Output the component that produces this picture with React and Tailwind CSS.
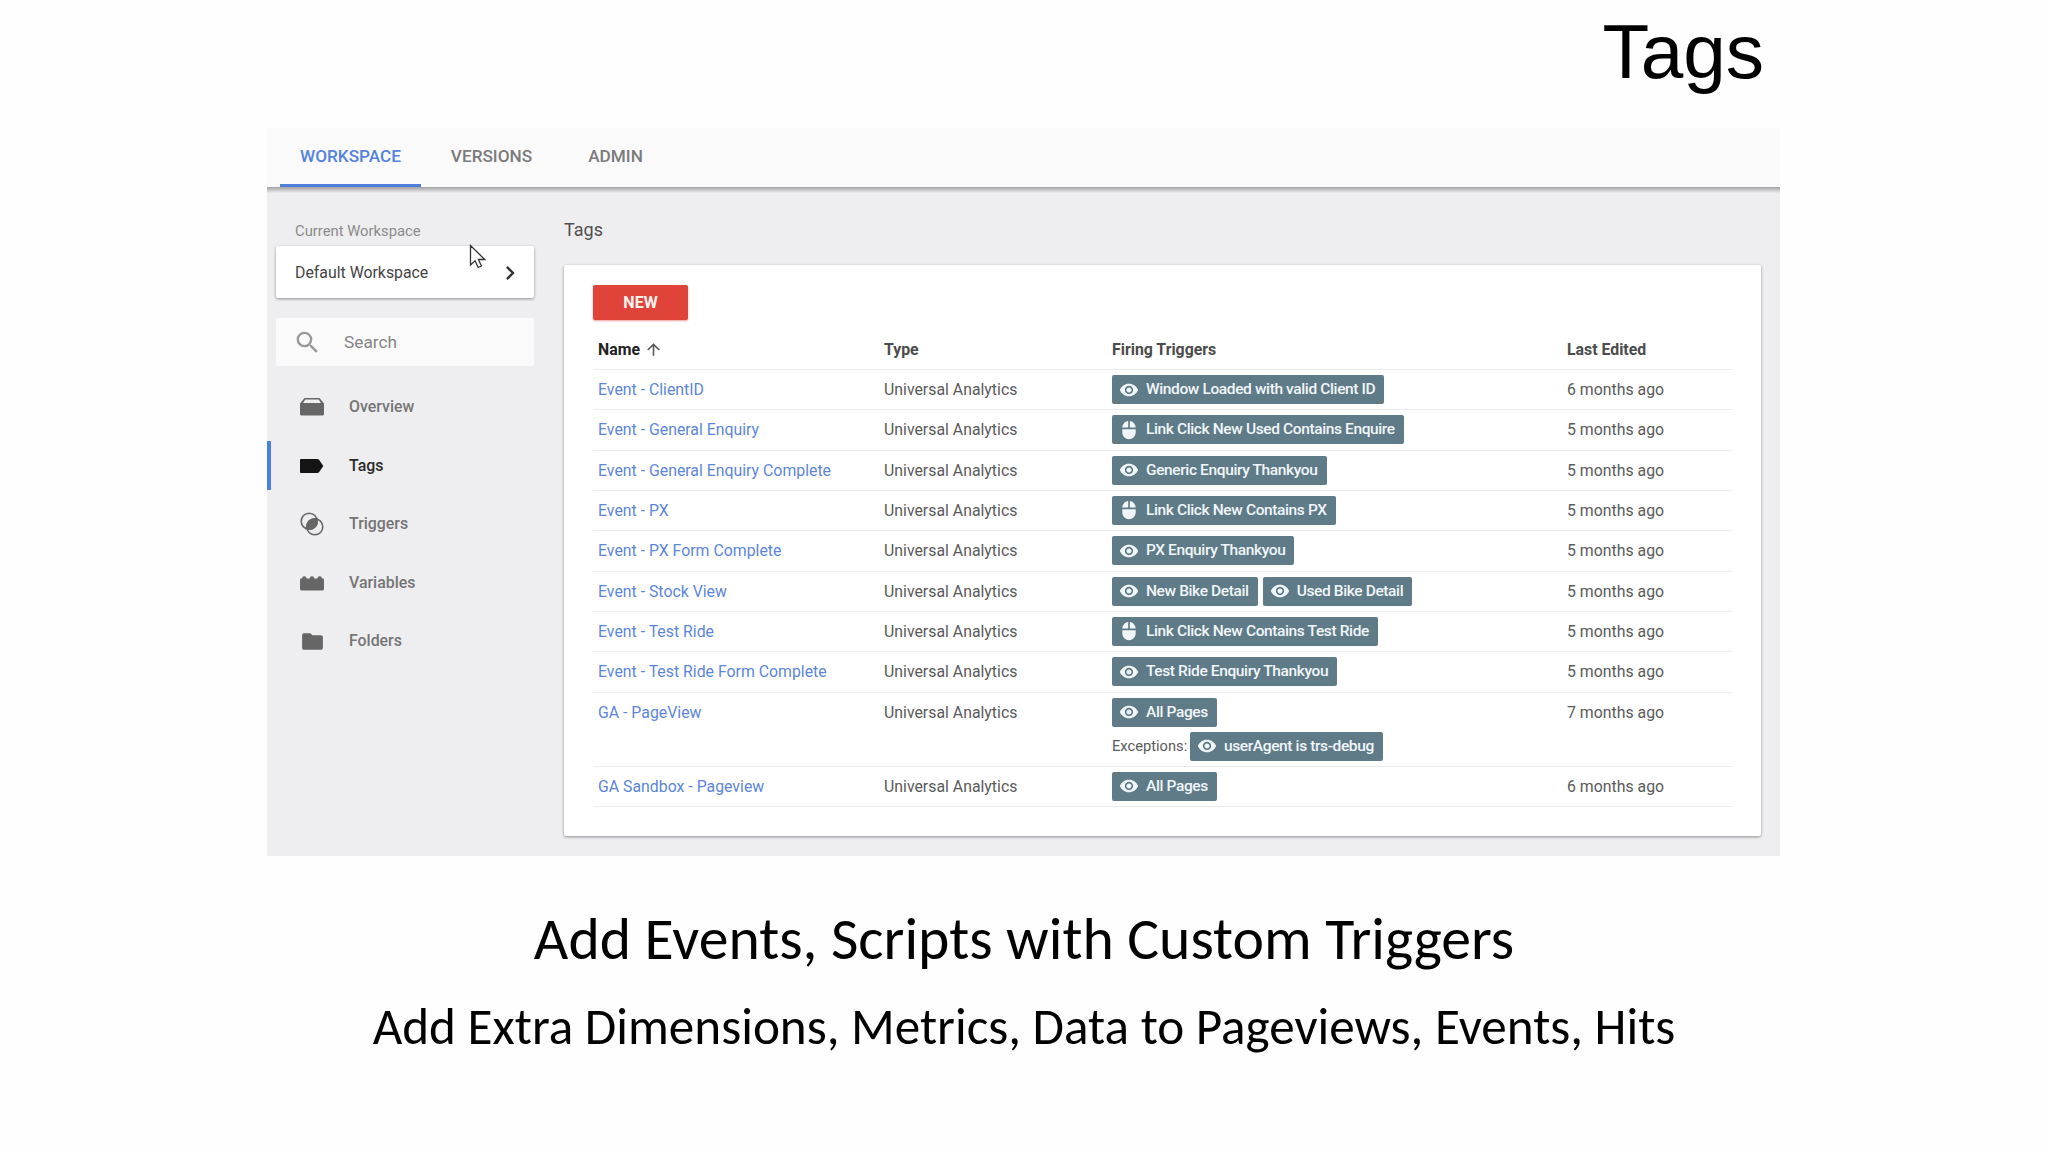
import { MdArrowUpward, MdChevronRight, MdFolder, MdMouse, MdSearch, MdVisibility } from 'react-icons/md'

const tags = [
  { name: 'Event - ClientID', edited: '6 months ago', triggers: [{ kind: 'view', label: 'Window Loaded with valid Client ID' }] },
  { name: 'Event - General Enquiry', edited: '5 months ago', triggers: [{ kind: 'click', label: 'Link Click New Used Contains Enquire' }] },
  { name: 'Event - General Enquiry Complete', edited: '5 months ago', triggers: [{ kind: 'view', label: 'Generic Enquiry Thankyou' }] },
  { name: 'Event - PX', edited: '5 months ago', triggers: [{ kind: 'click', label: 'Link Click New Contains PX' }] },
  { name: 'Event - PX Form Complete', edited: '5 months ago', triggers: [{ kind: 'view', label: 'PX Enquiry Thankyou' }] },
  {
    name: 'Event - Stock View',
    edited: '5 months ago',
    triggers: [
      { kind: 'view', label: 'New Bike Detail' },
      { kind: 'view', label: 'Used Bike Detail' },
    ],
  },
  { name: 'Event - Test Ride', edited: '5 months ago', triggers: [{ kind: 'click', label: 'Link Click New Contains Test Ride' }] },
  { name: 'Event - Test Ride Form Complete', edited: '5 months ago', triggers: [{ kind: 'view', label: 'Test Ride Enquiry Thankyou' }] },
  {
    name: 'GA - PageView',
    edited: '7 months ago',
    triggers: [{ kind: 'view', label: 'All Pages' }],
    exceptions: [{ kind: 'view', label: 'userAgent is trs-debug' }],
  },
  { name: 'GA Sandbox - Pageview', edited: '6 months ago', triggers: [{ kind: 'view', label: 'All Pages' }] },
]

function OverviewIcon() {
  return (
    <svg width="24" height="24" viewBox="0 0 24 24" fill="currentColor">
      <path d="M4.500 3h15L24 8.500V19a1.500 1.500 0 0 1-1.500 1.500h-21A1.500 1.500 0 0 1 0 19V8.500L4.500 3zm.8 1.400L3 8h18l-2.300-3.600H5.300z" />
    </svg>
  )
}

function TagIcon() {
  return (
    <svg width="24" height="24" viewBox="0 0 24 24" fill="currentColor">
      <path d="M1 5h16.300c.7 0 1.300.3 1.700.8L23.300 12 19 18.200c-.4.5-1 .8-1.700.8H1a1 1 0 0 1-1-1V6a1 1 0 0 1 1-1z" />
    </svg>
  )
}

function TriggersIcon() {
  return (
    <svg width="24" height="24" viewBox="0 0 24 24" fill="none" stroke="currentColor" strokeWidth="1.600">
      <circle cx="9.200" cy="9.200" r="8" />
      <circle cx="14.800" cy="14.800" r="8" />
      <path d="M16.900 7.100a8 8 0 0 1-9.800 9.800 8 8 0 0 1 9.800-9.800z" fill="currentColor" />
    </svg>
  )
}

function VariablesIcon() {
  return (
    <svg width="24" height="24" viewBox="0 0 24 24" fill="currentColor">
      <path d="M0 8.500A1 1 0 0 1 1 7.500h1a2.300 2.300 0 0 1 4.600 0h3.100a2.300 2.300 0 0 1 4.600 0h3.100a2.300 2.300 0 0 1 4.600 0h1a1 1 0 0 1 1 1V18a1.500 1.500 0 0 1-1.500 1.500h-21A1.500 1.500 0 0 1 0 18V8.500z" />
    </svg>
  )
}

const navItems = [
  { label: 'Overview', icon: <OverviewIcon /> },
  { label: 'Tags', icon: <TagIcon />, active: true },
  { label: 'Triggers', icon: <TriggersIcon /> },
  { label: 'Variables', icon: <VariablesIcon /> },
  { label: 'Folders', icon: <MdFolder size={25} /> },
]

function TriggerChip({ kind, label }) {
  const Icon = kind === 'click' ? MdMouse : MdVisibility
  return (
    <span className="inline-flex h-[29px] items-center gap-[7px] whitespace-nowrap rounded-[2px] bg-[#5f7b88] pl-[7px] pr-[9px] text-[15.500px] font-medium tracking-[-0.38px] text-[#f1f6f9]">
      <Icon size={20} />
      {label}
    </span>
  )
}

function TopTabs() {
  return (
    <nav className="flex h-[59px] bg-[#fafafb] pl-[13px] text-[17.200px] font-medium text-[#7b7b7b]">
      <span className="flex w-[141px] items-center justify-center border-b-[3px] border-[#4f7fd9] pt-[2px] text-[#5583e0]">WORKSPACE</span>
      <span className="flex w-[141px] items-center justify-center pb-[1px]">VERSIONS</span>
      <span className="flex w-[107px] items-center justify-center pb-[1px]">ADMIN</span>
    </nav>
  )
}

function Sidebar() {
  return (
    <aside className="w-[297px] shrink-0">
      <div className="relative pl-[9px] pt-[26px]">
        <p className="pl-[19px] text-[14.800px] leading-[24px] text-[#8b8b8b]">Current Workspace</p>
        <div className="mt-[3px] flex h-[52px] w-[258px] items-center justify-between rounded-[2px] bg-white pl-[19px] pr-[10px] pt-px text-[15.850px] text-[#444] shadow-[0_1px_3px_rgba(0,0,0,0.4)]">
          Default Workspace
          <MdChevronRight size={28} className="text-[#333]" />
        </div>
        <svg className="absolute left-[202px] top-[51px]" width="18" height="26" viewBox="0 0 18 26">
          <path d="M1.500 1.500v19.500l4.600-4.200 3 6.700 3.300-1.500-3-6.500h6.300L1.500 1.500z" fill="#fff" stroke="#333" strokeWidth="1.300" />
        </svg>
        <div className="mt-[20px] flex h-[48px] w-[258px] items-center rounded-[2px] bg-[#fafafa] pl-[17px] text-[17.300px] text-[#858585]">
          <MdSearch size={29} className="text-[#999]" />
          <span className="ml-[22px] pt-px">Search</span>
        </div>
      </div>
      <ul className="mt-[12px] text-[15.900px] font-medium text-[#757575]">
        {navItems.map(item => (
          <li key={item.label} className="flex h-[58.500px] items-center">
            <span className={item.active ? 'h-[49px] w-[4px] bg-[#4a80e0]' : 'h-[49px] w-[4px]'} />
            <span className={item.active ? 'ml-[29px] flex w-[49px] text-[#141414]' : 'ml-[29px] flex w-[49px] text-[#666]'}>
              {item.icon}
            </span>
            <span className={item.active ? 'text-[#2b2b2b]' : ''}>{item.label}</span>
          </li>
        ))}
      </ul>
    </aside>
  )
}

function TagTable() {
  return (
    <div className="mt-[16px] text-[15.850px] text-[#5a5a5a]">
      <div className="grid h-[34px] grid-cols-[286px_228px_455px_1fr] items-start border-b border-[#ececef] pl-[5px] pt-px font-bold leading-[26px] text-[#4c4c4c]">
        <span className="flex items-center gap-[4px] text-[#222]">
          Name
          <MdArrowUpward size={19} className="-mt-[2px] text-[#555]" />
        </span>
        <span>Type</span>
        <span>Firing Triggers</span>
        <span>Last Edited</span>
      </div>
      {tags.map(tag => (
        <div key={tag.name} className="grid grid-cols-[286px_228px_455px_1fr] border-b border-[#ececef] pb-[5.330px] pl-[5px] pt-[5px] leading-[29px]">
          <span className="text-[#5c86da]">{tag.name}</span>
          <span>Universal Analytics</span>
          <div className="flex flex-col gap-[5px]">
            <div className="flex gap-[5px]">
              {tag.triggers.map(t => <TriggerChip key={t.label} kind={t.kind} label={t.label} />)}
            </div>
            {tag.exceptions && (
              <div className="flex gap-[4px]">
                <span className="w-[74px] whitespace-nowrap text-[14.700px]">Exceptions:</span>
                {tag.exceptions.map(t => <TriggerChip key={t.label} kind={t.kind} label={t.label} />)}
              </div>
            )}
          </div>
          <span>{tag.edited}</span>
        </div>
      ))}
    </div>
  )
}

export default function App() {
  return (
    <div className="flex h-[1152px] w-[2048px] flex-col overflow-hidden bg-[#fefefe]">
      <h1 className="h-[128px] pr-[284px] pt-[9px] text-right font-['Liberation_Sans',sans-serif] text-[76.500px] leading-[86px] text-black">Tags</h1>
      <div className="ml-[267px] h-[728px] w-[1513px] shrink-0 bg-[#eeeef0] font-[Roboto,sans-serif]">
        <TopTabs />
        <div className="h-[6px] bg-linear-to-b from-[#a2a2a4] to-[#eeeef0]" />
        <div className="flex">
          <Sidebar />
          <main className="w-[1197px] pt-[23px]">
            <h2 className="text-[18px] leading-[27px] text-[#505050]">Tags</h2>
            <div className="mt-[22px] h-[571px] rounded-[2px] bg-white pl-[29px] pr-[29px] pt-[20px] shadow-[0_1px_3px_rgba(0,0,0,0.4)]">
              <button className="block h-[35px] w-[95px] rounded-[2px] bg-[#df4339] text-[16px] font-bold text-[#fff3ef] shadow-[0_1px_2px_rgba(223,67,57,0.5)]">NEW</button>
              <TagTable />
            </div>
          </main>
        </div>
      </div>
      <div className="flex flex-col items-center font-[Carlito,Lato,sans-serif] text-black">
        <p className="mt-[46px] whitespace-nowrap text-[59.700px] leading-[74px]">Add Events, Scripts with Custom Triggers</p>
        <p className="mt-[20px] whitespace-nowrap text-[51.150px] leading-[62px]">Add Extra Dimensions, Metrics, Data to Pageviews, Events, Hits</p>
      </div>
    </div>
  )
}
